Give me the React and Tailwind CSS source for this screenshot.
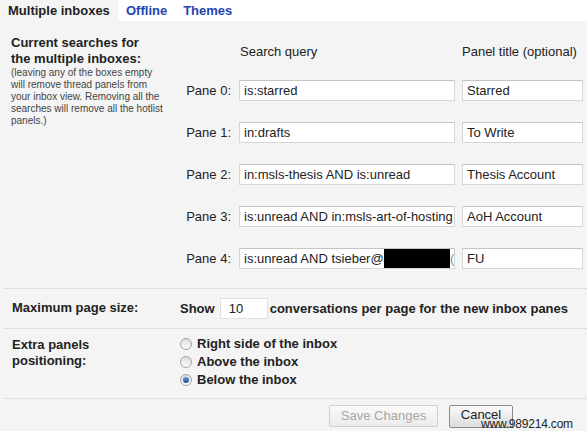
import React from "react";

const panes = [
  ["is:starred", "Starred"],
  ["in:drafts", "To Write"],
  ["in:msls-thesis AND is:unread", "Thesis Account"],
  ["is:unread AND in:msls-art-of-hosting", "AoH Account"],
  ["is:unread AND tsieber@", "FU"],
];

function Radio({ checked }) {
  return (
    <span className="w-[12px] h-[12px] rounded-full border border-[#a3a3a3] bg-gradient-to-b from-[#dcdcdc] to-[#ffffff] flex items-center justify-center shrink-0">
      {checked && (
        <span className="w-[6px] h-[6px] rounded-full bg-gradient-to-b from-[#5aa0de] to-[#1a4f8c]" />
      )}
    </span>
  );
}

export default function App() {
  return (
    <div
      className="w-[587px] h-[431px] bg-[#f4f4f4] relative overflow-hidden text-[#222]"
      style={{ fontFamily: '"Liberation Sans", Arial, sans-serif' }}
    >
      {/* Tabs */}
      <div className="h-[21px] bg-white flex text-[13px] font-bold leading-[21px]">
        <div className="w-[118px] bg-[#f4f4f4] pl-[8px] text-[#222]">Multiple inboxes</div>
        <div className="px-[8px] text-[#1f45b3]">Offline</div>
        <div className="px-[8px] text-[#1f45b3]">Themes</div>
      </div>

      {/* Section 1 */}
      <div className="flex h-[267px]">
        <div className="w-[180px] pl-[11px] pt-[14px] shrink-0">
          <div className="text-[13px] font-bold leading-[16px] whitespace-nowrap">
            Current searches for
            <br />
            the multiple inboxes:
          </div>
          <div className="text-[10px] leading-[12px] text-[#444] whitespace-nowrap">
            (leaving any of the boxes empty
            <br />
            will remove thread panels from
            <br />
            your inbox view. Removing all the
            <br />
            searches will remove all the hotlist
            <br />
            panels.)
          </div>
        </div>
        <div className="pt-[23px] flex flex-col text-[13px]">
          <div className="flex leading-[16px] h-[16px]">
            <div className="w-[60px]" />
            <div className="w-[222px]">Search query</div>
            <div>Panel title (optional)</div>
          </div>
          <div className="mt-[20px] flex flex-col gap-[21px]">
            {panes.map(([q, t], i) => (
              <div key={i} className="flex items-center h-[21px]">
                <div className="w-[53px] text-right pr-[2px]">Pane {i}:</div>
                <div className="w-[216px] h-[21px] ml-[6px] bg-white border border-[#d6d6d6] border-t-[#c4c4c4] flex items-center pl-[4px] overflow-hidden whitespace-nowrap relative">
                  {q}
                  {i === 4 && (
                    <>
                      <span className="absolute left-[144px] top-0 w-[66px] h-[20px] bg-black" />
                      <span className="absolute left-[210px] top-0 leading-[19px] text-[#888]">(</span>
                    </>
                  )}
                </div>
                <div className="w-[121px] h-[21px] ml-[7px] bg-white border border-[#d6d6d6] border-t-[#c4c4c4] flex items-center pl-[4px] whitespace-nowrap">
                  {t}
                </div>
              </div>
            ))}
          </div>
        </div>
      </div>

      {/* Section 2 */}
      <div className="ml-[3px] border-t border-[#e0e0e0] flex items-center h-[40px] text-[13px] font-bold">
        <div className="w-[177px] pl-[9px] -mt-[2px]">Maximum page size:</div>
        <div className="flex items-center">
          <span>Show</span>
          <span className="ml-[5px] w-[48px] h-[21px] bg-white border border-[#e0e0e0] flex items-center pl-[8px] font-normal">10</span>
          <span className="ml-[2px]">conversations per page for the new inbox panes</span>
        </div>
      </div>

      {/* Section 3 */}
      <div className="ml-[3px] border-t border-[#e0e0e0] flex h-[70px] text-[13px] font-bold">
        <div className="w-[177px] pl-[9px] pt-[8px] leading-[16px]">
          Extra panels
          <br />
          positioning:
        </div>
        <div className="pt-[6px] flex flex-col leading-[18px]">
          <div className="flex items-center gap-[5px]"><Radio />Right side of the inbox</div>
          <div className="flex items-center gap-[5px]"><Radio />Above the inbox</div>
          <div className="flex items-center gap-[5px]"><Radio checked />Below the inbox</div>
        </div>
      </div>

      {/* Buttons */}
      <div className="ml-[3px] border-t border-[#e0e0e0] flex pt-[6px] pl-[326px] gap-[11px] text-[13px]">
        <div className="w-[109px] h-[22px] border border-[#cfcfcf] rounded-[2px] bg-gradient-to-b from-[#fafafa] to-[#ececec] text-[#a8a8a8] flex items-center justify-center">
          Save Changes
        </div>
        <div className="w-[64px] h-[23px] border border-[#8a8a8a] rounded-[2px] bg-gradient-to-b from-[#fbfbfb] to-[#dcdcdc] text-[#222] flex items-start justify-center leading-[18px]">
          Cancel
        </div>
      </div>

      {/* watermark */}
      <div className="absolute left-[481px] top-[417px] text-[12px] leading-[14px] text-[#222] tracking-[-0.2px]">
        www.989214.com
      </div>
    </div>
  );
}
